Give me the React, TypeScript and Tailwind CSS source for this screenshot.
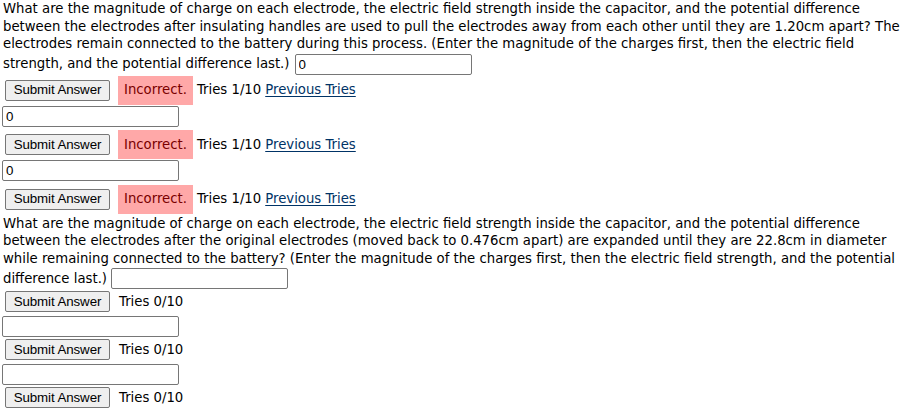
import React from "react";

const verdana = { fontFamily: '"DejaVu Sans", Verdana, sans-serif' };

function Input({ value = "" }: { value?: string }) {
  return (
    <input
      readOnly
      value={value}
      className="w-[177px] h-[21px] border border-[#767676] rounded-[2px] bg-white px-[3px] text-[13.33px] text-black align-middle font-['Liberation_Sans',Arial,sans-serif] outline-none"
    />
  );
}

function SubmitBtn() {
  return (
    <button className="w-[105px] h-[21px] border border-[#767676] rounded-[2px] bg-[#efefef] text-[13.33px] text-black font-['Liberation_Sans',Arial,sans-serif] leading-none px-0 tracking-[-0.1px]">
      Submit Answer
    </button>
  );
}

function IncorrectRow() {
  return (
    <div className="flex items-center h-[31px] pl-[2px]">
      <SubmitBtn />
      <span className="ml-[8px] h-[29px] flex items-center bg-[#ffa8a8] text-[#7a0000] px-[6px]">Incorrect.</span>
      <span className="ml-[4px]">Tries 1/10</span>
      <span className="ml-[4px] underline text-[#003366] underline-offset-[2px]">Previous Tries</span>
    </div>
  );
}

function TriesRow() {
  return (
    <div className="flex items-start pt-[2px] h-[27px] pl-[2px]">
      <SubmitBtn />
      <span className="ml-[9px] h-[21px] flex items-center">Tries 0/10</span>
    </div>
  );
}

export default function App() {
  return (
    <div className="w-[915px] h-[413px] bg-white text-black text-[13.25px] pl-[3px] overflow-hidden" style={verdana}>
      <div className="leading-[17.5px]">
        What are the magnitude of charge on each electrode, the electric field strength inside the capacitor, and the potential difference
        <br />
        between the electrodes after insulating handles are used to pull the electrodes away from each other until they are 1.20cm apart? The
        <br />
        electrodes remain connected to the battery during this process. (Enter the magnitude of the charges first, then the electric field
        <br />
        <div className="flex items-center h-[21px] mt-[1px]">
          <span>strength, and the potential difference last.)</span>
          <span className="ml-[5px] flex"><Input value="0" /></span>
        </div>
      </div>
      <IncorrectRow />
      <div className="h-[23.5px] flex items-start -ml-[1px]">
        <Input value="0" />
      </div>
      <IncorrectRow />
      <div className="h-[23.5px] flex items-start -ml-[1px]">
        <Input value="0" />
      </div>
      <IncorrectRow />
      <div className="leading-[17.5px]">
        What are the magnitude of charge on each electrode, the electric field strength inside the capacitor, and the potential difference
        <br />
        between the electrodes after the original electrodes (moved back to 0.476cm apart) are expanded until they are 22.8cm in diameter
        <br />
        while remaining connected to the battery? (Enter the magnitude of the charges first, then the electric field strength, and the potential
        <br />
        <div className="flex items-center h-[21px] mt-[1px]">
          <span>difference last.)</span>
          <span className="ml-[4px] flex"><Input /></span>
        </div>
      </div>
      <TriesRow />
      <div className="h-[21px] flex items-start -ml-[1px]">
        <Input />
      </div>
      <TriesRow />
      <div className="h-[21px] flex items-start -ml-[1px]">
        <Input />
      </div>
      <TriesRow />
    </div>
  );
}
